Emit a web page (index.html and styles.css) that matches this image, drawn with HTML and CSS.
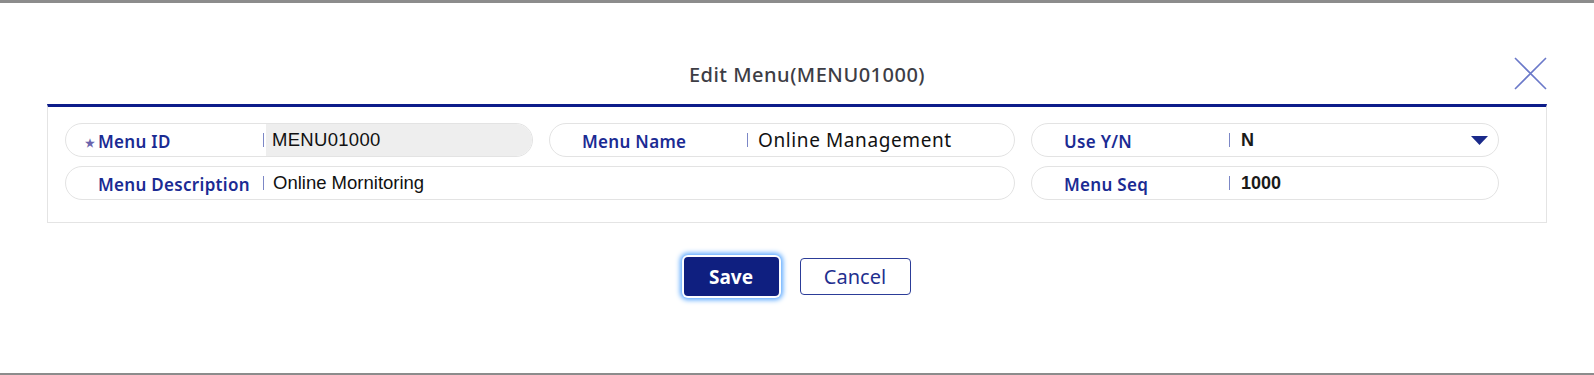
FILE: index.html
```html
<!DOCTYPE html>
<html lang="en">
<head>
  <meta charset="UTF-8">
  <meta name="viewport" content="width=device-width, initial-scale=1.0">
  <title>Edit Menu</title>
  <link rel="stylesheet" href="styles.css">
</head>
<body>
  <div class="screen">
    <div class="dialog">
      <div class="dialog-head">
        <h2 class="dialog-title">Edit Menu(MENU01000)</h2>
        <button class="close-btn" aria-label="close">
          <svg width="33" height="33" viewBox="0 0 33 33">
            <path d="M1 1 L32 32 M32 1 L1 32" stroke="#6b79c9" stroke-width="1.6" fill="none"/>
          </svg>
        </button>
      </div>

      <div class="form-panel">
        <div class="field">
          <span class="label"><span class="req">★</span>Menu ID</span>
          <span class="bar"></span>
          <span class="value value-readonly">MENU01000</span>
        </div>
        <div class="field">
          <span class="label">Menu Name</span>
          <span class="bar"></span>
          <span class="value value-alt">Online Management</span>
        </div>
        <div class="field">
          <span class="label">Use Y/N</span>
          <span class="bar"></span>
          <span class="value value-bold">N</span>
          <svg class="caret" width="17" height="9" viewBox="0 0 17 9">
            <polygon points="0,0 17,0 8.5,9" fill="#1a2a8a"/>
          </svg>
        </div>
        <div class="field field-wide">
          <span class="label">Menu Description</span>
          <span class="bar"></span>
          <span class="value">Online Mornitoring</span>
        </div>
        <div class="field">
          <span class="label">Menu Seq</span>
          <span class="bar"></span>
          <span class="value value-bold">1000</span>
        </div>
      </div>

      <div class="actions">
        <button class="btn btn-save">Save</button>
        <button class="btn btn-cancel">Cancel</button>
      </div>
    </div>
  </div>
</body>
</html>
```

FILE: styles.css
```css
* {
  margin: 0;
  padding: 0;
  box-sizing: border-box;
}

body {
  background: #fff;
  font-family: 'Noto Sans', sans-serif;
}

.screen {
  height: 375px;
  border-top: 3px solid #8c8c8c;
  border-bottom: 2px solid #8c8c8c;
  overflow: hidden;
}

.dialog {
  width: 1500px;
  margin-left: 47px;
}

.dialog-head {
  position: relative;
  height: 101px;
  display: flex;
  align-items: flex-end;
  justify-content: center;
  padding-bottom: 16px;
  padding-left: 20px;
}

.dialog-title {
  font-size: 20px;
  font-weight: 500;
  color: #3d3d45;
  line-height: 26px;
  letter-spacing: 0.5px;
}

.close-btn {
  position: absolute;
  right: 0;
  top: 54px;
  background: none;
  border: none;
  width: 33px;
  height: 33px;
  cursor: pointer;
}

.close-btn svg {
  display: block;
}

.form-panel {
  border: 1px solid #e4e4e4;
  border-top: 3px solid #0d1c8a;
  padding: 16px 17px 22px;
  display: grid;
  grid-template-columns: 468px 466px 468px;
  grid-auto-rows: 34px;
  gap: 9px 16px;
}

.field {
  display: flex;
  align-items: center;
  border: 1px solid #e3e3e3;
  border-radius: 17px;
  overflow: hidden;
  position: relative;
}

.field-wide {
  grid-column: 1 / 3;
}

.label {
  width: 197px;
  padding-left: 32px;
  padding-top: 3px;
  font-size: 17px;
  font-weight: 600;
  color: #1b2b93;
  letter-spacing: 0.3px;
  white-space: nowrap;
  position: relative;
}

.req {
  position: absolute;
  left: 19px;
  top: 8px;
  font-size: 11px;
  color: #6a64ad;
}

.bar {
  width: 1px;
  height: 14px;
  background: #7c87c6;
}

.value {
  flex: 1;
  height: 100%;
  display: flex;
  align-items: center;
  padding-left: 9px;
  font-family: 'Liberation Sans', Arial, sans-serif;
  font-size: 18.5px;
  color: #111;
}

.value-readonly {
  background: #eeeeee;
  margin-left: 2px;
  padding-left: 6px;
  letter-spacing: 0.3px;
}

.value-alt {
  font-family: 'Noto Sans', sans-serif;
  font-size: 19px;
  letter-spacing: 0.6px;
  padding-left: 10px;
}

.value-bold {
  font-weight: bold;
  font-size: 18px;
  padding-left: 11px;
  color: #1a1a1a;
}

.caret {
  position: absolute;
  right: 10px;
  top: 12px;
}

.actions {
  display: flex;
  justify-content: center;
  align-items: center;
  gap: 21px;
  margin-top: 34px;
}

.btn {
  font-family: 'Noto Sans', sans-serif;
  border-radius: 4px;
  cursor: pointer;
}

.btn-save {
  width: 95px;
  height: 39px;
  background: #0f1f80;
  color: #fff;
  font-size: 19px;
  font-weight: 700;
  border: none;
  box-shadow: 0 0 0 2px #fff, 0 0 5px 4px #5aa8ff;
}

.btn-cancel {
  width: 111px;
  height: 37px;
  background: #fff;
  color: #1f2f8f;
  font-size: 20px;
  border: 1.5px solid #2c3d98;
}
```
